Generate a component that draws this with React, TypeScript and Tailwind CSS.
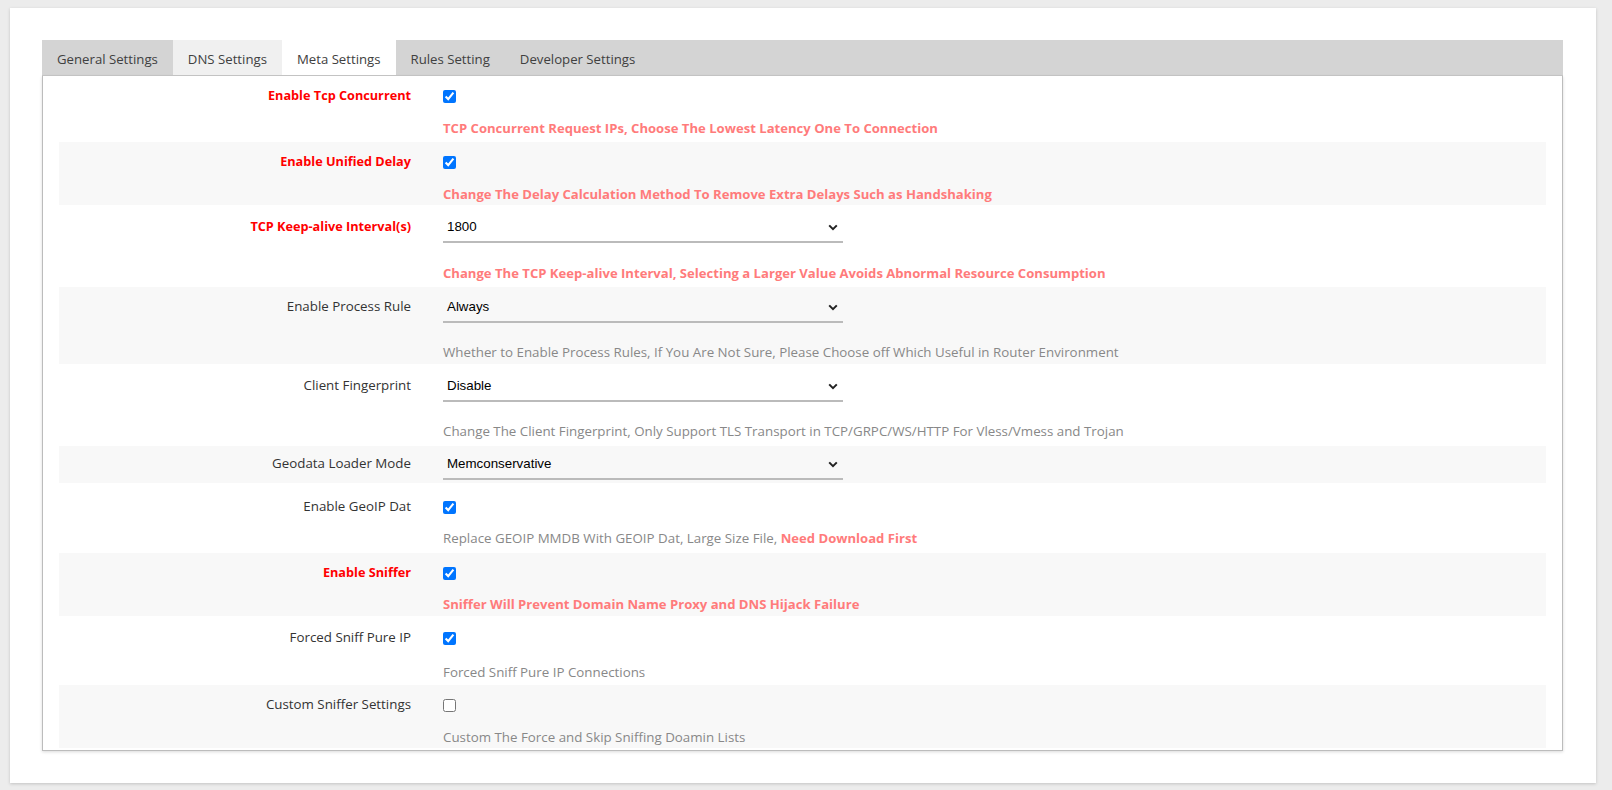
import React from 'react'

type Row = {
  label: string
  important?: boolean
  kind: 'check' | 'select'
  checked?: boolean
  value?: string
  desc?: React.ReactNode
  descImportant?: boolean
  striped: boolean
  cls: string
  descCls?: string
}

const rows: Row[] = [
  { label: 'Enable Tcp Concurrent', important: true, kind: 'check', checked: true, desc: 'TCP Concurrent Request IPs, Choose The Lowest Latency One To Connection', descImportant: true, striped: false, cls: 'h-[66px] pt-[8px]', descCls: 'mt-[10px]' },
  { label: 'Enable Unified Delay', important: true, kind: 'check', checked: true, desc: 'Change The Delay Calculation Method To Remove Extra Delays Such as Handshaking', descImportant: true, striped: true, cls: 'h-[63px] pt-[8px]', descCls: 'mt-[10px]' },
  { label: 'TCP Keep-alive Interval(s)', important: true, kind: 'select', value: '1800', desc: 'Change The TCP Keep-alive Interval, Selecting a Larger Value Avoids Abnormal Resource Consumption', descImportant: true, striped: false, cls: 'h-[82px] pt-[8px]', descCls: 'mt-[20px]' },
  { label: 'Enable Process Rule', kind: 'select', value: 'Always', desc: 'Whether to Enable Process Rules, If You Are Not Sure, Please Choose off Which Useful in Router Environment', striped: true, cls: 'h-[77px] pt-[6px]', descCls: 'mt-[19px]' },
  { label: 'Client Fingerprint', kind: 'select', value: 'Disable', desc: 'Change The Client Fingerprint, Only Support TLS Transport in TCP/GRPC/WS/HTTP For Vless/Vmess and Trojan', striped: false, cls: 'h-[82px] pt-[8px]', descCls: 'mt-[19px]' },
  { label: 'Geodata Loader Mode', kind: 'select', value: 'Memconservative', striped: true, cls: 'h-[37px] pt-[4px]' },
  {
    label: 'Enable GeoIP Dat', kind: 'check', checked: true,
    desc: <>Replace GEOIP MMDB With GEOIP Dat, Large Size File, <b className="font-bold text-[13.1px] text-[#ff7b7b]">Need Download First</b></>,
    striped: false, cls: 'h-[70px] pt-[12px]', descCls: 'mt-[9px]'
  },
  { label: 'Enable Sniffer', important: true, kind: 'check', checked: true, desc: 'Sniffer Will Prevent Domain Name Proxy and DNS Hijack Failure', descImportant: true, striped: true, cls: 'h-[63px] pt-[8px]', descCls: 'mt-[9px]' },
  { label: 'Forced Sniff Pure IP', kind: 'check', checked: true, desc: 'Forced Sniff Pure IP Connections', striped: false, cls: 'h-[69px] pt-[10px]', descCls: 'mt-[12px]' },
  { label: 'Custom Sniffer Settings', kind: 'check', checked: false, desc: 'Custom The Force and Skip Sniffing Doamin Lists', striped: true, cls: 'h-[63px] pt-[8px]', descCls: 'mt-[10px]' },
]

const tabs = ['General Settings', 'DNS Settings', 'Meta Settings', 'Rules Setting', 'Developer Settings']

function Chevron() {
  return (
    <svg width="10" height="7" viewBox="0 0 10 7" className="mr-[5px]">
      <polyline points="1.2,1.4 5,5.2 8.8,1.4" fill="none" stroke="#222" strokeWidth="2" />
    </svg>
  )
}

function SettingRow({ row }: { row: Row }) {
  const boxH = row.kind === 'select' ? 'h-[28px]' : 'h-[24px]'
  return (
    <div className={`flex ${row.cls} ${row.striped ? 'bg-[#f8f8f8]' : ''}`}>
      <div className={`w-[352px] shrink-0 flex items-center justify-end ${boxH} ${row.important ? 'font-bold text-[12.7px] text-[#ff0000]' : 'text-[#333]'}`}>
        {row.label}
      </div>
      <div className="ml-[32px] flex flex-col">
        {row.kind === 'check' ? (
          <div className="h-[24px] flex items-center">
            <input type="checkbox" defaultChecked={row.checked} className="m-0 w-[13px] h-[13px]" />
          </div>
        ) : (
          <div className="w-[400px] h-[30px] border-b-2 border-[#bbbbbb] flex items-start">
            <div className="flex-1 h-[28px] flex items-center justify-between pl-[4px] font-['Liberation_Sans',Arial,sans-serif] text-[13.33px] text-black">
              <span>{row.value}</span>
              <Chevron />
            </div>
          </div>
        )}
        {row.desc && (
          <div className={`${row.descCls} leading-[20px] whitespace-nowrap ${row.descImportant ? 'font-bold text-[13.1px] text-[#ff7b7b]' : 'text-[#888]'}`}>
            {row.desc}
          </div>
        )}
      </div>
    </div>
  )
}

export default function App() {
  return (
    <div className="min-h-screen bg-[#ececec] pt-[8px] pl-[10px] pr-[16px] pb-[7px] font-['Open_Sans',sans-serif] text-[13.33px]">
      <div className="bg-white shadow-[0_1px_3px_rgba(0,0,0,0.18)] px-[32px] pt-[32px] pb-[32px] pr-[33px]">
        <div className="flex h-[36px] bg-[#d4d4d4] border-b border-[#c8c8c8]">
          {tabs.map((t, i) => (
            <div
              key={t}
              className={`px-[15px] pt-[5px] flex items-center text-[13.2px] text-[#404040] ${i === 2 ? 'bg-white' : i === 1 ? 'bg-[#f0f0f0]' : ''}`}
            >
              {t}
            </div>
          ))}
        </div>
        <div className="border-l border-r border-b border-[#bcbcbc] shadow-[0_1px_3px_rgba(0,0,0,0.15)] px-[16px] pb-[2px]">
          {rows.map((r) => (
            <SettingRow key={r.label} row={r} />
          ))}
        </div>
      </div>
    </div>
  )
}
